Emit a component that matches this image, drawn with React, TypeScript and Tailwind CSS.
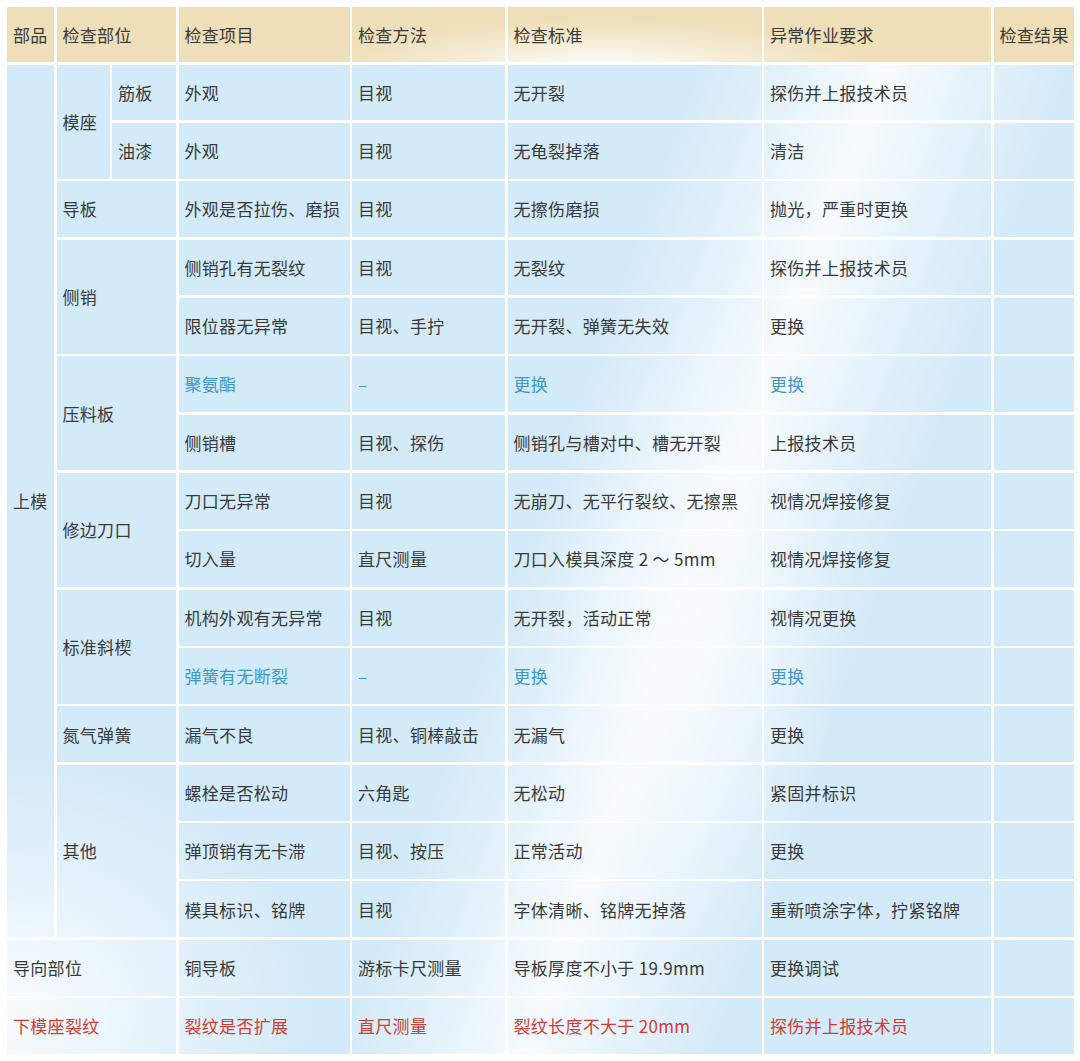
import React from "react";

const HEAD =
  "bg-[#eedfb8] bg-fixed bg-[image:radial-gradient(ellipse_270px_48px_at_600px_68px,rgba(255,255,255,0.95),rgba(255,255,255,0))]";
const BODY =
  "bg-[#d3eaf8] bg-fixed bg-[image:radial-gradient(ellipse_150px_320px_at_690px_650px,rgba(255,255,255,0.45),rgba(255,255,255,0)),linear-gradient(110deg,rgba(255,255,255,0)_49%,rgba(255,255,255,0.8)_62%,rgba(255,255,255,0)_75%),radial-gradient(ellipse_320px_260px_at_0px_1010px,rgba(255,255,255,0.85),rgba(255,255,255,0))]";

type Tone = "dark" | "blue" | "red";

const TEXT: Record<Tone, string> = {
  dark: "text-[#3a3a3a]",
  blue: "text-[#3e98cc]",
  red: "text-[#d23c33]",
};

function Cell({
  children,
  span = "",
  head = false,
  tone = "dark",
}: {
  children?: React.ReactNode;
  span?: string;
  head?: boolean;
  tone?: Tone;
}) {
  return (
    <div
      className={`flex items-center pl-[6px] whitespace-nowrap ${span} ${
        head ? HEAD : BODY
      } ${TEXT[tone]}`}
    >
      {children}
    </div>
  );
}

type Row = {
  lead?: React.ReactNode;
  item: string;
  method: string;
  std: string;
  action: string;
  tone?: Tone;
};

// each row lists the cells that start on it, before the four data cells
const rows: Row[] = [
  {
    lead: (
      <>
        <Cell span="row-span-15">上模</Cell>
        <Cell span="row-span-2">模座</Cell>
        <Cell>筋板</Cell>
      </>
    ),
    item: "外观",
    method: "目视",
    std: "无开裂",
    action: "探伤并上报技术员",
  },
  { lead: <Cell>油漆</Cell>, item: "外观", method: "目视", std: "无龟裂掉落", action: "清洁" },
  {
    lead: <Cell span="col-span-2">导板</Cell>,
    item: "外观是否拉伤、磨损",
    method: "目视",
    std: "无擦伤磨损",
    action: "抛光，严重时更换",
  },
  {
    lead: <Cell span="col-span-2 row-span-2">侧销</Cell>,
    item: "侧销孔有无裂纹",
    method: "目视",
    std: "无裂纹",
    action: "探伤并上报技术员",
  },
  { item: "限位器无异常", method: "目视、手拧", std: "无开裂、弹簧无失效", action: "更换" },
  {
    lead: <Cell span="col-span-2 row-span-2">压料板</Cell>,
    item: "聚氨酯",
    method: "–",
    std: "更换",
    action: "更换",
    tone: "blue",
  },
  { item: "侧销槽", method: "目视、探伤", std: "侧销孔与槽对中、槽无开裂", action: "上报技术员" },
  {
    lead: <Cell span="col-span-2 row-span-2">修边刀口</Cell>,
    item: "刀口无异常",
    method: "目视",
    std: "无崩刀、无平行裂纹、无擦黑",
    action: "视情况焊接修复",
  },
  { item: "切入量", method: "直尺测量", std: "刀口入模具深度 2 ～ 5mm", action: "视情况焊接修复" },
  {
    lead: <Cell span="col-span-2 row-span-2">标准斜楔</Cell>,
    item: "机构外观有无异常",
    method: "目视",
    std: "无开裂，活动正常",
    action: "视情况更换",
  },
  { item: "弹簧有无断裂", method: "–", std: "更换", action: "更换", tone: "blue" },
  {
    lead: <Cell span="col-span-2">氮气弹簧</Cell>,
    item: "漏气不良",
    method: "目视、铜棒敲击",
    std: "无漏气",
    action: "更换",
  },
  {
    lead: <Cell span="col-span-2 row-span-3">其他</Cell>,
    item: "螺栓是否松动",
    method: "六角匙",
    std: "无松动",
    action: "紧固并标识",
  },
  { item: "弹顶销有无卡滞", method: "目视、按压", std: "正常活动", action: "更换" },
  { item: "模具标识、铭牌", method: "目视", std: "字体清晰、铭牌无掉落", action: "重新喷涂字体，拧紧铭牌" },
  {
    lead: <Cell span="col-span-3">导向部位</Cell>,
    item: "铜导板",
    method: "游标卡尺测量",
    std: "导板厚度不小于 19.9mm",
    action: "更换调试",
  },
  {
    lead: (
      <Cell span="col-span-3" tone="red">
        下模座裂纹
      </Cell>
    ),
    item: "裂纹是否扩展",
    method: "直尺测量",
    std: "裂纹长度不大于 20mm",
    action: "探伤并上报技术员",
    tone: "red",
  },
];

export default function App() {
  return (
    <div className="w-[1080px] h-[1061px] bg-white pt-[7px] pl-[7px] font-['Noto_Sans_CJK_SC','Noto_Sans',sans-serif] text-[17px] tracking-[0.3px]">
      <div className="grid h-[1047px] grid-cols-[47px_53px_64px_171px_153px_254px_227px_80px] grid-rows-[55px_repeat(17,minmax(0,1fr))] gap-[2.5px]">
        <Cell head>部品</Cell>
        <Cell head span="col-span-2">
          检查部位
        </Cell>
        <Cell head>检查项目</Cell>
        <Cell head>检查方法</Cell>
        <Cell head>检查标准</Cell>
        <Cell head>异常作业要求</Cell>
        <Cell head>检查结果</Cell>

        {rows.map((r, i) => (
          <React.Fragment key={i}>
            {r.lead}
            <Cell tone={r.tone}>{r.item}</Cell>
            <Cell tone={r.tone}>{r.method}</Cell>
            <Cell tone={r.tone}>{r.std}</Cell>
            <Cell tone={r.tone}>{r.action}</Cell>
            <Cell />
          </React.Fragment>
        ))}
      </div>
    </div>
  );
}
